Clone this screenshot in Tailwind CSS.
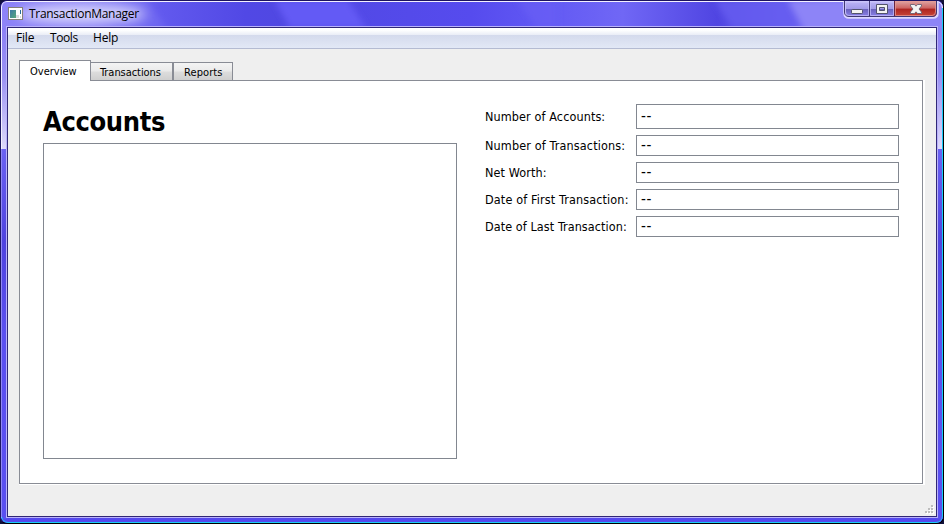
<!DOCTYPE html>
<html lang="en">
<head>
<meta charset="utf-8">
<title>TransactionManager</title>
<script src="https://cdn.jsdelivr.net/npm/@tailwindcss/browser@4"></script>
</head>
<body class="w-[944px] h-[524px] overflow-hidden bg-[#11103a] text-black font-['DejaVu_Sans_Condensed','DejaVu_Sans',sans-serif]">
<div class="relative w-[944px] h-[524px] flex flex-col overflow-hidden rounded-[7px] border border-t-[#1d1360] border-l-[#1d1763] border-r-black border-b-black bg-[#5549ee]">
  <!-- window frame shading -->
  <svg class="absolute inset-0" width="942" height="522" viewBox="1 1 942 522">
    <defs>
      <linearGradient id="bar">
        <stop offset="0" stop-color="#8e84f8"/><stop offset=".1" stop-color="#8279f5"/><stop offset=".17" stop-color="#6259ee"/><stop offset=".26" stop-color="#5148e5"/><stop offset=".3" stop-color="#5048e2"/><stop offset=".5" stop-color="#564bee"/><stop offset=".58" stop-color="#6259f4"/><stop offset=".66" stop-color="#7067f5"/><stop offset=".76" stop-color="#5045e2"/><stop offset=".83" stop-color="#6860ee"/><stop offset="1" stop-color="#9188f6"/>
      </linearGradient>
      <linearGradient id="side" x1="0" y1="0" x2="0" y2="1">
        <stop offset="0" stop-color="#8b80f6"/><stop offset=".4" stop-color="#9a91f4"/><stop offset="1" stop-color="#dedafa"/>
      </linearGradient>
      <linearGradient id="low" x1="0" y1="0" x2="0" y2="1">
        <stop offset="0" stop-color="#6b62f2"/><stop offset=".25" stop-color="#4f43df"/><stop offset=".5" stop-color="#5b50f0"/><stop offset="1" stop-color="#5a4ff0"/>
      </linearGradient>
      <filter id="soft"><feGaussianBlur stdDeviation="3"/></filter>
      <filter id="glow" x="-30%" y="-100%" width="160%" height="300%"><feGaussianBlur stdDeviation="6"/></filter>
    </defs>
    <rect x="1" y="1" width="942" height="27" fill="url(#bar)"/>
    <g filter="url(#soft)">
      <path d="M105 0h42l20 28h-42z" fill="#9d94fa" opacity=".2"/>
      <path d="M274 0h74l18 28h-76z" fill="#645af5"/>
      <path d="M517 0h40v28h-20z" fill="#685ef5" opacity=".7"/>
      <path d="M714 0h76l16 28h-74z" fill="#655cf0" opacity=".8"/>
      <path d="M788 0h160v34h-142z" fill="#8d84f7"/>
    </g>
    <ellipse cx="82" cy="14" rx="64" ry="10" fill="#fff" opacity=".65" filter="url(#glow)"/>
    <rect x="1" y="28" width="6" height="121" fill="url(#side)"/>
    <rect x="937" y="28" width="6" height="121" fill="url(#side)"/>
    <rect x="1" y="149" width="6" height="370" fill="url(#low)"/>
    <rect x="937" y="149" width="6" height="370" fill="url(#low)"/>
    <path d="M1.500 518V7Q2 1.500 7 1.500H936Q942 2 942.500 8" fill="none" stroke="#f4f1ff"/>
    <path d="M1.500 149V517" stroke="#9188f4"/>
    <path d="M942.500 8V516Q942 522 936 522.500H8Q3 522 1.500 517" fill="none" stroke="#19cbf8"/>
  </svg>

  <header class="relative h-[25px] shrink-0 flex items-start pl-[7px]">
    <svg class="mt-[6px]" width="15" height="13" viewBox="0 0 15 13" shape-rendering="crispEdges">
      <defs><linearGradient id="app" x2="1" y2="1"><stop stop-color="#3d79a8"/><stop offset="1" stop-color="#57a979"/></linearGradient></defs>
      <rect x=".5" y=".5" width="14" height="12" fill="#fff" stroke="#858078"/>
      <rect x="2" y="3" width="6" height="8" fill="url(#app)"/><rect x="8" y="8" width="3" height="3" fill="#d9dcde"/><rect x="12" y="3" width="1" height="4" fill="#276d9b"/><rect x="12" y="9" width="1" height="2" fill="#d9dcde"/>
    </svg>
    <h1 class="ml-[6px] mt-[4px] font-['Open_Sans',sans-serif] text-[12px] leading-[18px] whitespace-nowrap tracking-[-0.3px]">TransactionManager</h1>
    <svg class="absolute left-[842px] top-0" width="97" height="18" viewBox="0 0 97 18">
      <defs>
        <linearGradient id="btn" x2="0" y2="1"><stop stop-color="#bdb6f7"/><stop offset=".47" stop-color="#a39be8"/><stop offset=".5" stop-color="#6b62bd"/><stop offset="1" stop-color="#8f86ee"/></linearGradient>
        <linearGradient id="red" x2="0" y2="1"><stop stop-color="#dfa4a4"/><stop offset=".45" stop-color="#cc6260"/><stop offset=".5" stop-color="#ae2420"/><stop offset="1" stop-color="#c9493d"/></linearGradient>
      </defs>
      <path d="M1.500 0V12Q1.500 16.500 6 16.500H90Q94.500 16.500 94.500 12V0z" fill="url(#btn)" stroke="#dcd7ff" stroke-width="2.500"/>
      <path d="M52 0V16H89Q94 16 94 11V0z" fill="url(#red)"/>
      <path d="M1.500 0V11Q1.500 15.500 6 15.500H89Q93.500 15.500 93.500 11V0" fill="none" stroke="#403874"/>
      <path d="M2.500 .5H25.500V14.500H6Q2.500 14.500 2.500 11zM27.500 .5H50.500V14.500H27.500z" fill="none" stroke="#c4bdf8" stroke-opacity=".75"/>
      <path d="M52.500 .5H92.500V11Q92.500 14.500 89 14.500H52.500z" fill="none" stroke="#e59a94" stroke-opacity=".75"/>
      <path d="M26.500 0V15" stroke="#403874"/><path d="M51.500 0V15" stroke="#682342"/>
      <rect x="8.500" y="8.500" width="11" height="4" rx=".7" fill="#f2f2f2" stroke="#53536c"/>
      <path d="M33.500 3.500h11v9h-11zM36.500 6.500v3h5v-3z" fill="#f2f2f2" fill-rule="evenodd" stroke="#53536c"/>
      <path d="M67.500 3.500h4l1.500 1.700 1.500-1.700h4v1.500l-2.500 3 2.500 3v1.500h-4l-1.500-1.700-1.500 1.700h-4v-1.500l2.500-3-2.500-3z" fill="#f4f4f4" stroke="#6b6072" stroke-width=".9"/>
    </svg>
  </header>

  <div class="relative mx-[5px] w-[932px] h-[492px] border border-[#b9b2fa]">
    <div class="h-full border border-[#302777] bg-[#efefef] flex flex-col">
      <nav class="h-[21px] shrink-0 flex pl-[8px] border-b border-[#b4bbd2] bg-[linear-gradient(to_bottom,#fff_0px,#fff_2px,#e9edf6_7px,#d4daec_7px,#e2e8f6_20px)] font-['Open_Sans',sans-serif] text-[12px] leading-[20px]">
        <span class="w-[34px] tracking-[-0.2px]">File</span><span class="w-[43px] tracking-[-0.4px]">Tools</span><span class="tracking-[-0.2px]">Help</span>
      </nav>

      <div class="mt-[11px] ml-[11px] flex items-end h-[21px] relative z-10 text-[11px] leading-[17px] whitespace-nowrap">
        <div class="w-[72px] h-[21px] border border-b-0 border-[#898c95] bg-white pl-[10px] pt-[2px]"><span class="tracking-[0px]">Overview</span></div>
        <div class="w-[82px] h-[19px] border border-l-0 border-[#898c95] bg-[linear-gradient(to_bottom,#f4f4f4_0%,#eaeaea_48%,#dddddd_52%,#cfcfcf_100%)] pl-[9px] pt-[1px]"><span class="tracking-[-0.06px]">Transactions</span></div>
        <div class="w-[60px] h-[19px] border border-[#898c95] bg-[linear-gradient(to_bottom,#f4f4f4_0%,#eaeaea_48%,#dddddd_52%,#cfcfcf_100%)] pl-[10px] pt-[1px]"><span class="tracking-[0.1px]">Reports</span></div>
      </div>

      <main class="-mt-px ml-[11px] w-[906px] h-[405px] bg-white pr-[2px] pb-px">
        <div class="h-full border border-[#898c95] flex pl-[23px] pt-[23px]">
          <section class="w-[414px]">
            <h2 class="h-[39px] text-[27px] leading-[35px] font-bold tracking-[-0.36px]">Accounts</h2>
            <div class="h-[316px] border border-[#828790]"></div>
          </section>
          <section class="ml-[28px] w-[414px] grid grid-cols-[151px_263px] auto-rows-min gap-y-[6px] items-center text-[12.5px] leading-[18px] whitespace-nowrap">
            <span class="tracking-[0.11px]">Number of Accounts:</span><div class="h-[25px] border border-[#828790] pl-[4px] leading-[23px] text-[15px] tracking-[0.6px]">--</div>
            <span class="tracking-[0.14px]">Number of Transactions:</span><div class="h-[21px] border border-[#828790] pl-[4px] leading-[19px] text-[15px] tracking-[0.6px]">--</div>
            <span class="tracking-[0.11px]">Net Worth:</span><div class="h-[21px] border border-[#828790] pl-[4px] leading-[19px] text-[15px] tracking-[0.6px]">--</div>
            <span class="tracking-[0.14px]">Date of First Transaction:</span><div class="h-[21px] border border-[#828790] pl-[4px] leading-[19px] text-[15px] tracking-[0.6px]">--</div>
            <span class="tracking-[0.08px]">Date of Last Transaction:</span><div class="h-[21px] border border-[#828790] pl-[4px] leading-[19px] text-[15px] tracking-[0.6px]">--</div>
          </section>
        </div>
      </main>
      <footer class="flex-1 flex items-end justify-end pr-[2px] pb-[2px]">
        <svg width="9" height="9" viewBox="0 0 9 9" shape-rendering="crispEdges">
          <path d="M7 1h2v2H7zM4 4h2v2H4zM7 4h2v2H7zM1 7h2v2H1zM4 7h2v2H4zM7 7h2v2H7z" fill="#fff"/>
          <path d="M6 0h2v2H6zM3 3h2v2H3zM6 3h2v2H6zM0 6h2v2H0zM3 6h2v2H3zM6 6h2v2H6z" fill="#bdbdbd"/>
        </svg>
      </footer>
    </div>
  </div>
</div>
</body>
</html>
